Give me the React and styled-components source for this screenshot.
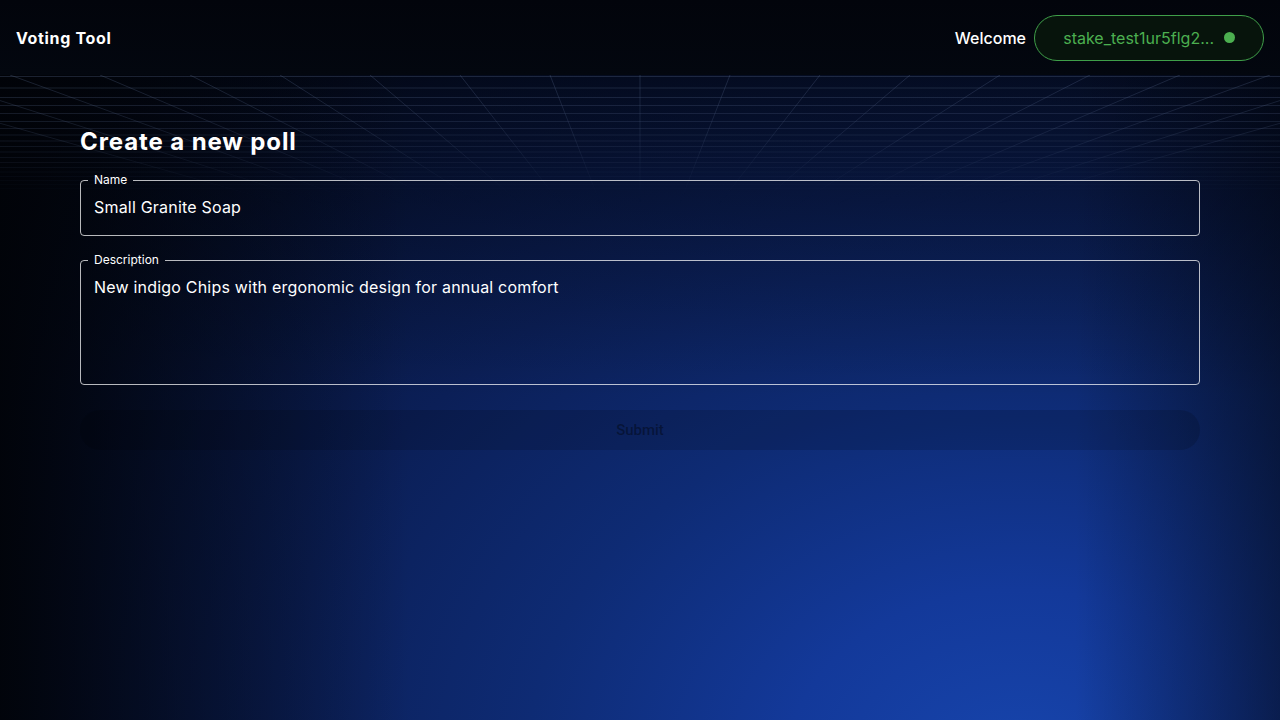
import React from 'react'
import styled, { createGlobalStyle } from 'styled-components'

const GlobalStyle = createGlobalStyle`
    html, body {
        margin: 0;
        padding: 0;
        background: #02050e;
    }
    body {
        font-family: Inter, "Noto Sans", sans-serif;
        color: #fff;
    }
`;

const Page = styled.div`
    position: relative;
    min-height: 100vh;
    overflow: hidden;
    background:
        linear-gradient(to right, rgba(1,3,8,0.95) 0%, rgba(1,3,8,0.5) 14%, rgba(1,3,8,0) 32%, rgba(1,3,8,0) 84%, rgba(1,3,8,0.5) 100%),
        linear-gradient(to bottom, rgba(1,3,8,0.75) 0%, rgba(1,3,8,0.35) 25%, rgba(1,3,8,0) 55%),
        radial-gradient(ellipse 1300px 1000px at 1020px 770px, #1745ad 0%, #13399a 18%, #0e2b74 38%, #0b1f57 58%, #07143a 80%, #040a1c 100%);
`;

const Header = styled.header`
    position: relative;
    z-index: 1;
    height: 75px;
    box-sizing: border-box;
    padding: 0 16px;
    display: flex;
    align-items: center;
    justify-content: space-between;
    background: linear-gradient(to bottom, #02040b, #03070f);
`;

const Brand = styled.div`
    font-family: Inter, sans-serif;
    font-weight: 700;
    font-size: 16px;
    letter-spacing: 0.65px;
`;

const UserBox = styled.div`
    display: flex;
    align-items: center;
    gap: 8px;
`;

const Welcome = styled.span`
    font-size: 16px;
    font-weight: 500;
`;

const WalletPill = styled.button`
    width: 230px;
    height: 46px;
    box-sizing: border-box;
    border-radius: 23px;
    border: 1px solid #3f9f49;
    background: #07140c;
    color: #4caf50;
    font-family: Inter, sans-serif;
    font-size: 16px;
    display: flex;
    align-items: center;
    justify-content: flex-end;
    gap: 10px;
    padding: 0 28px 0 20px;
    cursor: pointer;
`;

const Dot = styled.span`
    width: 11px;
    height: 11px;
    border-radius: 50%;
    background: #4caf50;
`;

const GridArt = styled.svg`
    position: absolute;
    left: 0;
    top: 75px;
    width: 100%;
    height: 130px;
    pointer-events: none;
`;

const Main = styled.main`
    position: relative;
    z-index: 1;
    padding: 51px 80px 0;
    display: flex;
    flex-direction: column;
`;

const Title = styled.h1`
    margin: 0 0 15px;
    font-family: Inter, sans-serif;
    font-size: 24px;
    line-height: 32px;
    font-weight: 700;
    letter-spacing: 0.9px;
`;

const Field = styled.fieldset`
    margin: 0 0 ${p => p.gap || 17}px;
    padding: 0;
    border: 1px solid rgba(255,255,255,0.72);
    border-radius: 4px;
    min-width: 0;
`;

const Legend = styled.legend`
    margin-left: 7px;
    padding: 0 6px;
    font-size: 12px;
    line-height: 14px;
    color: #fff;
`;

const Input = styled.input`
    display: block;
    width: 100%;
    box-sizing: border-box;
    height: 48px;
    padding: 0 13px 8px;
    border: none;
    background: transparent;
    color: #fff;
    font-family: Inter, sans-serif;
    font-size: 16px;
    letter-spacing: 0.2px;
    outline: none;
`;

const TextArea = styled.textarea`
    display: block;
    width: 100%;
    box-sizing: border-box;
    height: 117px;
    padding: 8px 13px;
    border: none;
    background: transparent;
    color: #fff;
    font-family: Inter, sans-serif;
    font-size: 16px;
    line-height: 24px;
    letter-spacing: 0.2px;
    resize: none;
    outline: none;
`;

const SubmitButton = styled.button`
    margin-top: 8px;
    height: 40px;
    border: none;
    border-radius: 20px;
    background: rgba(0,0,0,0.14);
    color: rgba(0,0,0,0.38);
    font-family: Roboto, sans-serif;
    font-weight: 500;
    font-size: 15px;
`;

const hLines = [76.5, 88, 97.5, 105.5, 113.5, 121.5, 128.5, 135, 141, 146.5, 152, 157.5, 162.5, 167.5, 172, 176.5, 180.5, 184.5, 188.5];

const GridBackdrop = () => {
    const vx = 640, vy = 305 - 75;
    const rays = [];
    for (let k = -9; k <= 9; k++) rays.push(640 + k * 90);
    return (
        <GridArt viewBox="0 0 1280 130" preserveAspectRatio="none">
            <defs>
                <linearGradient id="fade" x1="0" y1="0" x2="0" y2="1">
                    <stop offset="0" stopColor="#fff" stopOpacity="1" />
                    <stop offset="0.5" stopColor="#fff" stopOpacity="0.6" />
                    <stop offset="0.85" stopColor="#fff" stopOpacity="0.1" />
                    <stop offset="1" stopColor="#fff" stopOpacity="0" />
                </linearGradient>
                <mask id="gridMask">
                    <rect x="0" y="0" width="1280" height="130" fill="url(#fade)" />
                </mask>
            </defs>
            <g mask="url(#gridMask)" stroke="#5b6b8f" strokeOpacity="0.3" strokeWidth="1">
                {hLines.map(y => (
                    <line key={y} x1="0" x2="1280" y1={y - 75} y2={y - 75} />
                ))}
                {rays.map(x => (
                    <line key={x} x1={x} y1="0" x2={vx} y2={vy} />
                ))}
            </g>
        </GridArt>
    );
};

const App = () => {
    return (
        <Page>
            <GlobalStyle />
            <Header>
                <Brand>Voting Tool</Brand>
                <UserBox>
                    <Welcome>Welcome</Welcome>
                    <WalletPill>
                        <span>stake_test1ur5flg2...</span>
                        <Dot />
                    </WalletPill>
                </UserBox>
            </Header>
            <GridBackdrop />
            <Main>
                <Title>Create a new poll</Title>
                <Field>
                    <Legend>Name</Legend>
                    <Input defaultValue="Small Granite Soap" />
                </Field>
                <Field gap={17}>
                    <Legend>Description</Legend>
                    <TextArea defaultValue="New indigo Chips with ergonomic design for annual comfort" />
                </Field>
                <SubmitButton disabled>Submit</SubmitButton>
            </Main>
        </Page>
    )
}

export default App
